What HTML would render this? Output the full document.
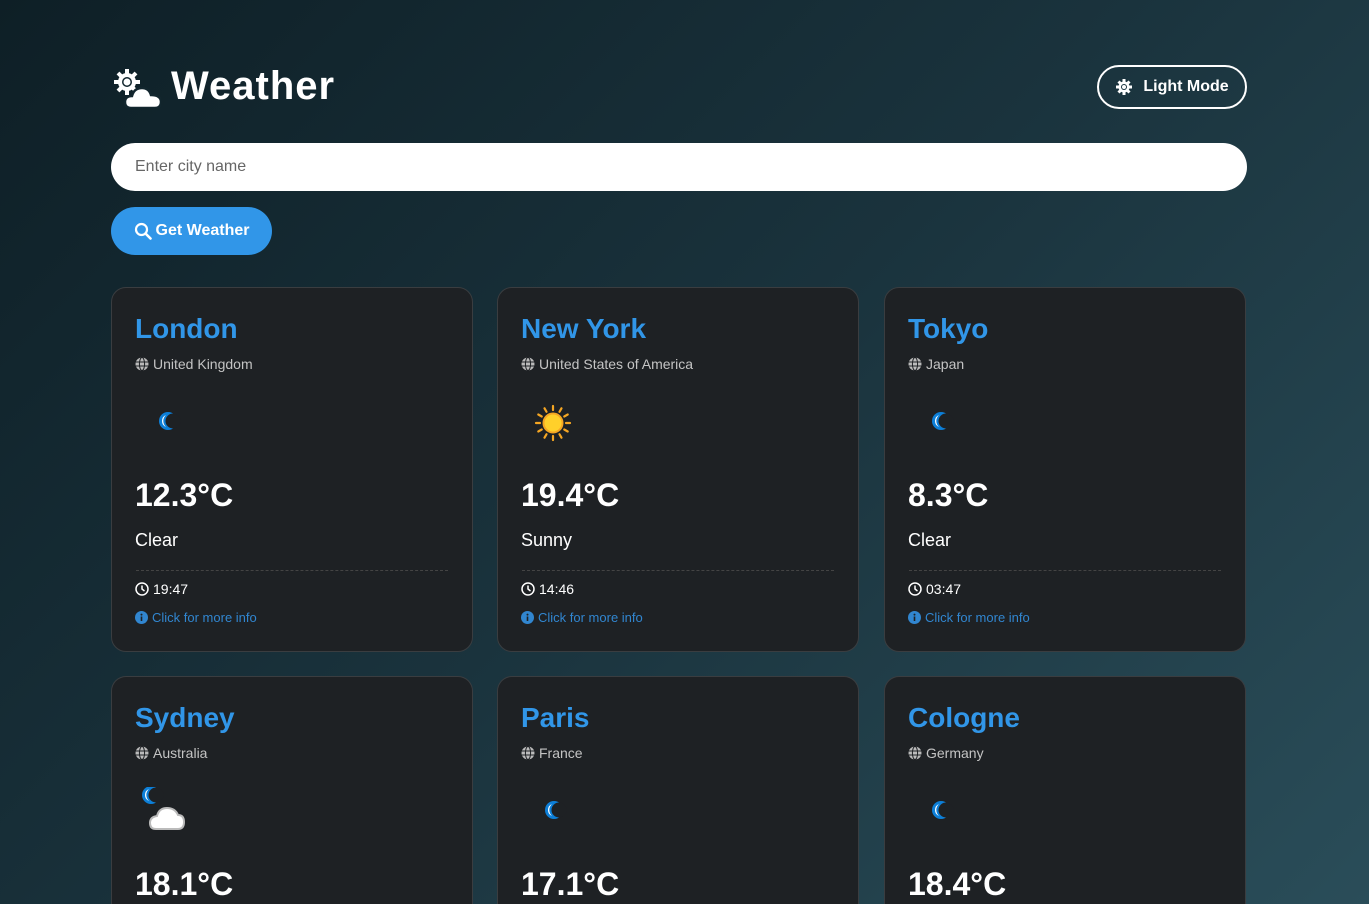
<!DOCTYPE html>
<html style="width:1369px;height:904px;overflow:hidden"><head><meta charset="utf-8"><style>
*{box-sizing:border-box;margin:0;padding:0}
body{width:1369px;height:904px;overflow:hidden;font-family:"Liberation Sans",sans-serif;background:linear-gradient(135deg,#0e1f26 0%,#1a333d 50%,#2a4d59 100%);color:#fff;position:relative}
.hdr{position:absolute;left:111px;top:64px;display:flex;align-items:center}
.hdr h1{font-size:40px;font-weight:bold;margin-left:10px;letter-spacing:1px}
.lm{position:absolute;left:1097px;top:65px;width:150px;height:44px;border:2px solid #fff;border-radius:22px;display:flex;align-items:center;justify-content:center;font-size:16px;font-weight:bold;gap:10px}
.search{position:absolute;left:111px;top:143px;width:1136px;height:48px;background:#fff;border-radius:24px;color:#666;font-size:16px;padding:15px 24px}
.btn{position:absolute;left:111px;top:207px;width:161px;height:48px;background:#3196e8;border-radius:24px;font-size:16px;font-weight:bold;display:flex;align-items:center;justify-content:center;gap:4px}
.card{position:absolute;width:362px;height:365px;background:#1e2124;border:1px solid #3a3d40;border-radius:15px;padding:0 23px}
.card h2{position:absolute;top:25px;font-size:28px;color:#3196e8;font-weight:bold}
.cty{position:absolute;top:68px;font-size:14px;color:#c4c4c4;display:flex;align-items:center;gap:4px}
.ic{position:absolute;top:110px;left:24px}
.tmp{position:absolute;top:189px;font-size:32px;font-weight:bold}
.ds{position:absolute;top:242px;font-size:18px}
.ln{position:absolute;top:282px;left:24px;right:24px;border-top:1px dashed #444}
.tm{position:absolute;top:293px;font-size:14px;display:flex;align-items:center;gap:4px}
.more{position:absolute;top:322px;font-size:13px;color:#3186d0;display:flex;align-items:center;gap:4px}
</style></head><body>
<div class="hdr">
<svg width="50" height="42" viewBox="0 0 50 42"><g fill="#fff"><circle cx="16" cy="16" r="9"/><g stroke="#fff" stroke-width="4"><line x1="16" y1="3" x2="16" y2="29"/><line x1="3" y1="16" x2="29" y2="16"/><line x1="7" y1="7" x2="25" y2="25"/><line x1="25" y1="7" x2="7" y2="25"/></g><circle cx="16" cy="16" r="5" fill="#12262e"/><circle cx="16" cy="16" r="3.5" fill="#fff"/><path d="M20 42 Q14 42 14 36 Q14 30 21 30 Q23 22 31 22 Q38 22 40 29 Q50 29 50 36 Q50 42 44 42 Z" stroke="#12262e" stroke-width="2.5"/></g></svg>
<h1>Weather</h1></div>
<div class="lm"><svg width="18" height="18" viewBox="0 0 18 18"><g stroke="#fff" stroke-width="3"><line x1="9" y1="1" x2="9" y2="17"/><line x1="1" y1="9" x2="17" y2="9"/><line x1="3.5" y1="3.5" x2="14.5" y2="14.5"/><line x1="14.5" y1="3.5" x2="3.5" y2="14.5"/></g><circle cx="9" cy="9" r="5.5" fill="#fff"/><circle cx="9" cy="9" r="3" fill="#1b3640"/><circle cx="9" cy="9" r="2" fill="#fff"/></svg>Light Mode</div>
<div class="search">Enter city name</div>
<div class="btn"><svg width="18" height="18" viewBox="0 0 18 18"><circle cx="7.5" cy="7.5" r="5.5" fill="none" stroke="#fff" stroke-width="2.2"/><line x1="11.5" y1="11.5" x2="16.5" y2="16.5" stroke="#fff" stroke-width="2.6" stroke-linecap="round"/></svg>Get Weather</div>
<div id="c"></div>
<script>
const G='<svg width="14" height="14" viewBox="0 0 14 14"><circle cx="7" cy="7" r="6.5" fill="#bbb"/><g stroke="#1e2124" stroke-width="1" fill="none"><ellipse cx="7" cy="7" rx="2.6" ry="6.5"/><line x1="0.5" y1="5" x2="13.5" y2="5"/><line x1="0.5" y1="9" x2="13.5" y2="9"/></g></svg>';
const C='<svg width="14" height="14" viewBox="0 0 14 14"><circle cx="7" cy="7" r="6" fill="none" stroke="#fff" stroke-width="1.5"/><path d="M7 3.5V7L9.5 9" stroke="#fff" stroke-width="1.5" fill="none"/></svg>';
const I='<svg width="13" height="13" viewBox="0 0 13 13"><circle cx="6.5" cy="6.5" r="6.5" fill="#3186d0"/><rect x="5.7" y="5.5" width="1.6" height="4.5" fill="#1e2124"/><circle cx="6.5" cy="3.6" r="1" fill="#1e2124"/></svg>';
const moon=(x,y)=>`<g transform="translate(${x},${y})"><circle cx="9" cy="9" r="9" fill="#0d7fd8"/><circle cx="14" cy="9" r="7.5" fill="#1e2124"/><path d="M7 3 A6.5 6.5 0 0 0 7 15 A8 8 0 0 1 7 3Z" fill="#fff"/></g>`;
const M='<svg width="70" height="50" viewBox="0 0 70 50">'+moon(23,14)+'</svg>';
const S='<svg width="70" height="50" viewBox="0 0 70 50"><g stroke="#f5a623" stroke-width="2.2" stroke-linecap="round">'+[...Array(12)].map((_,i)=>{const a=i*Math.PI/6,c=Math.cos(a),s=Math.sin(a);return `<line x1="${31+c*13}" y1="${25+s*13}" x2="${31+c*17}" y2="${25+s*17}"/>`}).join('')+'</g><circle cx="31" cy="25" r="9.5" fill="#ffd02a" stroke="#f5a623" stroke-width="2"/></svg>';
const N='<svg width="70" height="50" viewBox="0 0 70 50">'+moon(6,-1)+'<path d="M20 42 Q14 42 14 36 Q14 30 21 29 Q23 21 31 21 Q39 21 42 28 Q48 28 48 35 Q48 42 42 42Z" fill="#fff" stroke="#bbb" stroke-width="2"/></svg>';
const d=[["London","United Kingdom",M,"12.3°C","Clear","19:47"],["New York","United States of America",S,"19.4°C","Sunny","14:46"],["Tokyo","Japan",M,"8.3°C","Clear","03:47"],["Sydney","Australia",N,"18.1°C","",""],["Paris","France",M,"17.1°C","",""],["Cologne","Germany",M,"18.4°C","",""]];
const xs=[111,497,884];let h='';
d.forEach((c,i)=>{const x=xs[i%3],y=i<3?287:676;h+=`<div class="card" style="left:${x}px;top:${y}px;${i>2?'height:228px;border-bottom:none;border-radius:15px 15px 0 0':''}"><h2>${c[0]}</h2><div class="cty">${G}${c[1]}</div><div class="ic">${c[2]}</div><div class="tmp">${c[3]}</div><div class="ds">${c[4]}</div>`+(c[5]?`<div class="ln"></div><div class="tm">${C}${c[5]}</div><div class="more">${I}Click for more info</div>`:'')+`</div>`});
document.getElementById('c').innerHTML=h;
</script>
</body></html>
